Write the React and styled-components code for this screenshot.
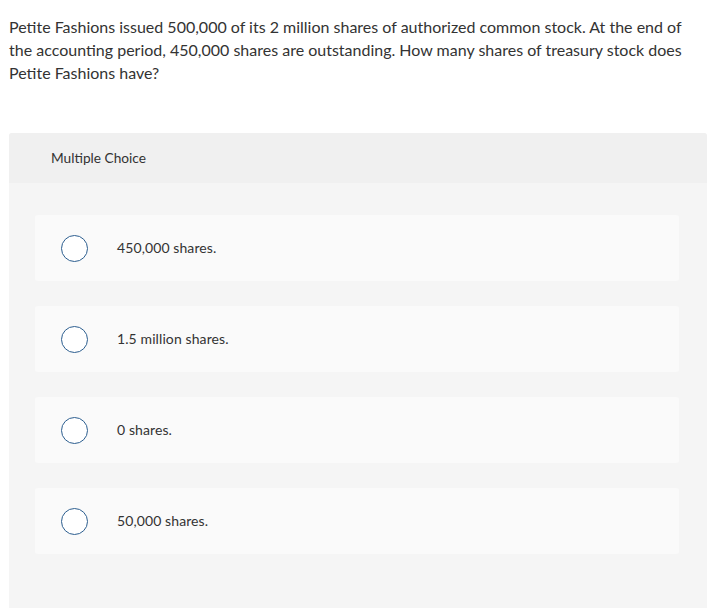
import React from "react";
import styled, { createGlobalStyle } from "styled-components";

const GlobalStyle = createGlobalStyle`
	body {
		margin: 0;
		background: #ffffff;
		font-family: "Lato", "Open Sans", sans-serif;
		color: #2b2b2b;
	}
`;

const options = [
	"450,000 shares.",
	"1.5 million shares.",
	"0 shares.",
	"50,000 shares.",
];

function App() {
	return (
		<Page>
			<GlobalStyle />
			<Question>
				Petite Fashions issued 500,000 of its 2 million shares of authorized
				common stock. At the end of the accounting period, 450,000 shares are
				outstanding. How many shares of treasury stock does Petite Fashions
				have?
			</Question>
			<Panel>
				<PanelHeader>Multiple Choice</PanelHeader>
				<OptionList>
					{options.map((text) => (
						<OptionCard key={text}>
							<Radio />
							<OptionText>{text}</OptionText>
						</OptionCard>
					))}
				</OptionList>
			</Panel>
		</Page>
	);
}

export default App;

const Page = styled.div`
	width: 728px;
	min-height: 608px;
	box-sizing: border-box;
	padding: 15px 21px 0 9px;
`;

const Question = styled.p`
	margin: 0;
	font-size: 16px;
	line-height: 23px;
	color: #333333;
`;

const Panel = styled.div`
	margin-top: 49px;
	background: #f5f5f5;
	border-radius: 3px 3px 0 0;
	min-height: 480px;
`;

const PanelHeader = styled.div`
	height: 50px;
	box-sizing: border-box;
	display: flex;
	align-items: center;
	padding: 0 0 2px 42px;
	background: #f0f0f0;
	border-radius: 3px 3px 0 0;
	font-size: 13.7px;
	color: #333333;
`;

const OptionList = styled.div`
	display: flex;
	flex-direction: column;
	gap: 25px;
	padding: 32px 28px 0 26px;
`;

const OptionCard = styled.div`
	height: 66px;
	display: flex;
	align-items: center;
	background: #fafafa;
	border-radius: 3px;
	padding-left: 26px;
`;

const Radio = styled.span`
	width: 25px;
	height: 25px;
	border: 1.5px solid #2c5e8f;
	border-radius: 50%;
	background: #ffffff;
	flex-shrink: 0;
`;

const OptionText = styled.span`
	margin-left: 29px;
	padding-bottom: 2px;
	font-size: 14px;
	letter-spacing: 0.1px;
	color: #333333;
`;
